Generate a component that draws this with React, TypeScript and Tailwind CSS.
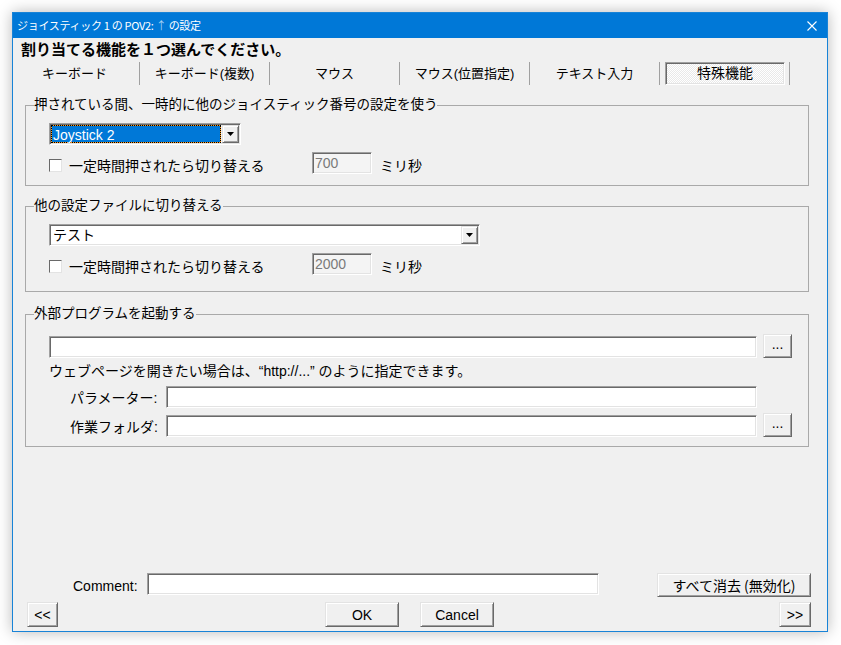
import React from "react";

const raised =
  "bg-[#f0f0f0] border border-t-[#e3e3e3] border-l-[#e3e3e3] border-b-[#696969] border-r-[#696969] shadow-[inset_1px_1px_0_#ffffff,inset_-1px_-1px_0_#a0a0a0]";
const sunken =
  "border border-t-[#a0a0a0] border-l-[#a0a0a0] border-b-white border-r-white shadow-[inset_1px_1px_0_#696969,inset_-1px_-1px_0_#e3e3e3]";

function Btn({ className, children }: { className: string; children?: React.ReactNode }) {
  return (
    <div className={`${raised} flex items-center justify-center text-[14px] leading-none text-black ${className}`}>
      {children}
    </div>
  );
}

function Arrow() {
  return (
    <svg width="7" height="4" viewBox="0 0 7 4">
      <polygon points="0,0 7,0 3.5,4" fill="#000" />
    </svg>
  );
}

function DropBtn() {
  return (
    <div className={`${raised} w-[17px] h-full flex items-center justify-center`}>
      <Arrow />
    </div>
  );
}

function Check() {
  return (
    <div className="w-[13px] h-[13px] bg-white border border-t-[#696969] border-l-[#696969] border-b-[#e3e3e3] border-r-[#e3e3e3]" />
  );
}

function DelayRow({ value }: { value: string }) {
  return (
    <div className="flex items-center h-[22px] ml-[15px]">
      <div className="w-[263px] flex items-center pt-[5px]">
        <Check />
        <span className="ml-[7px] text-[14px] leading-[16px]">一定時間押されたら切り替える</span>
      </div>
      <div className={`${sunken} w-[60px] h-[22px] bg-[#f4f4f4] flex items-center pl-[2px] text-[14px] text-[#7a7a7a]`}>
        {value}
      </div>
      <span className="ml-[8px] pt-[6px] text-[14px] leading-[16px]">ミリ秒</span>
    </div>
  );
}

const tabs = ["キーボード", "キーボード(複数)", "マウス", "マウス(位置指定)", "テキスト入力"];

export default function App() {
  return (
    <div className="w-[841px] h-[645px] bg-white pt-[12px] pl-[12px] font-['Liberation_Sans','Noto_Sans_CJK_JP',sans-serif] text-black">
      <div className="w-[816px] h-[620px] border border-[#1883d7] bg-[#f0f0f0] flex flex-col shadow-[0_0_14px_rgba(0,0,0,0.28)]">
        {/* Title bar */}
        <div className="h-[25px] bg-[#0078d7] flex items-center pl-[4px] pr-[10px] text-white text-[11px] tracking-[-0.3px] shrink-0">
          <span className="flex-1 font-['Noto_Sans_CJK_JP',sans-serif]">
            ジョイスティック 1 の POV2: <span className="text-[#a6d2f4]">↑</span> の設定
          </span>
          <svg width="10" height="10" viewBox="0 0 10 10">
            <path d="M0.5 0.5 L9.5 9.5 M9.5 0.5 L0.5 9.5" stroke="#fff" strokeWidth="1.1" />
          </svg>
        </div>

        {/* Heading */}
        <div className="h-[21px] pl-[8px] text-[15px] leading-[21px] font-bold font-['Noto_Sans_CJK_JP',sans-serif] shrink-0">
          割り当てる機能を１つ選んでください。
        </div>

        {/* Tabs */}
        <div className="mt-[3px] h-[23px] flex -ml-[3px] shrink-0">
          {tabs.map((t) => (
            <div
              key={t}
              className="w-[130px] h-[23px] border-r border-[#a0a0a0] flex items-center justify-center text-[13px]"
            >
              {t}
            </div>
          ))}
          <div className="w-[130px] h-[23px] border-r border-[#a0a0a0] flex items-center">
            <div
              className={`${sunken} ml-[5px] w-[120px] h-[23px] flex items-center justify-center text-[14px] bg-[image:repeating-conic-gradient(#ffffff_0%_25%,#e9e9e9_0%_50%)] bg-[length:2px_2px]`}
            >
              特殊機能
            </div>
          </div>
        </div>

        {/* Group 1 */}
        <fieldset className="mt-[12px] ml-[12px] w-[784px] h-[89px] border border-[#a9a9a9] pl-[8px] shrink-0">
          <legend className="text-[13.5px] leading-[16px]">押されている間、一時的に他のジョイスティック番号の設定を使う</legend>
          <div className={`${sunken} mt-[10px] ml-[15px] w-[192px] h-[22px] p-[1px] flex`}>
            <div className="flex-1 bg-[#ff9a1a] border border-dotted border-black">
              <div className="h-full bg-[#0078d7] text-white text-[14px] leading-[18px] pl-[1px]">Joystick 2</div>
            </div>
            <div className="ml-[1px]">
              <DropBtn />
            </div>
          </div>
          <div className="mt-[7px]">
            <DelayRow value="700" />
          </div>
        </fieldset>

        {/* Group 2 */}
        <fieldset className="mt-[12px] ml-[12px] w-[784px] h-[94px] border border-[#a9a9a9] pl-[8px] shrink-0">
          <legend className="text-[13.5px] leading-[16px]">他の設定ファイルに切り替える</legend>
          <div className={`${sunken} mt-[10px] ml-[15px] w-[431px] h-[22px] p-[1px] flex bg-white`}>
            <div className="flex-1 text-[14px] leading-[18px] pl-[2px]">テスト</div>
            <DropBtn />
          </div>
          <div className="mt-[7px]">
            <DelayRow value="2000" />
          </div>
        </fieldset>

        {/* Group 3 */}
        <fieldset className="mt-[14px] ml-[12px] w-[784px] h-[141px] border border-[#a9a9a9] pl-[8px] shrink-0">
          <legend className="text-[13.5px] leading-[16px]">外部プログラムを起動する</legend>
          <div className="ml-[15px] mt-[12px] h-[24px] flex items-end">
            <div className={`${sunken} w-[708px] h-[22px] bg-white`} />
            <Btn className="ml-[6px] w-[29px] h-[24px] pb-[4px]">...</Btn>
          </div>
          <div className="ml-[15px] mt-[4px] h-[18px] text-[14px] leading-[18px]">
            ウェブページを開きたい場合は、“http://...” のように指定できます。
          </div>
          <div className="ml-[15px] mt-[6px] h-[22px] flex items-center">
            <div className="w-[117px] pl-[21px] text-[14px] pt-[2px]">パラメーター:</div>
            <div className={`${sunken} w-[591px] h-[22px] bg-white`} />
          </div>
          <div className="ml-[15px] mt-[5px] h-[24px] flex items-end">
            <div className="w-[117px] pl-[21px] text-[14px] h-[22px] flex items-center pt-[2px]">作業フォルダ:</div>
            <div className={`${sunken} w-[591px] h-[22px] bg-white`} />
            <Btn className="ml-[6px] w-[29px] h-[24px] pb-[4px]">...</Btn>
          </div>
        </fieldset>

        {/* Bottom */}
        <div className="mt-auto pb-[4px] shrink-0">
          <div className="h-[24px] flex items-center">
            <div className="w-[134px] pl-[60px] text-[14px] pt-[2px]">Comment:</div>
            <div className={`${sunken} w-[452px] h-[22px] bg-white self-start`} />
            <Btn className="ml-[58px] w-[154px] h-[24px]">
              <span className="font-['Noto_Sans_CJK_JP',sans-serif]">すべて消去 (無効化)</span>
            </Btn>
          </div>
          <div className="mt-[5px] h-[25px] flex">
            <Btn className="ml-[14px] w-[31px] h-[25px]">&lt;&lt;</Btn>
            <Btn className="ml-[267px] w-[74px] h-[25px]">OK</Btn>
            <Btn className="ml-[21px] w-[74px] h-[25px]">Cancel</Btn>
            <Btn className="ml-auto mr-[16px] w-[32px] h-[25px]">&gt;&gt;</Btn>
          </div>
        </div>
      </div>
    </div>
  );
}
